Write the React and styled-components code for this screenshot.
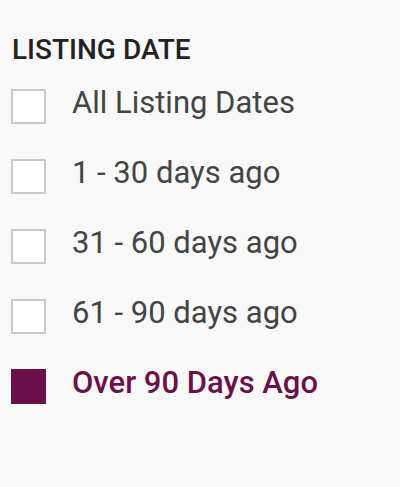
import React, { useState } from "react";
import styled, { createGlobalStyle } from "styled-components";

const Global = createGlobalStyle`
  html, body { margin: 0; padding: 0; background: #f9f9f9; }
  body { font-family: Roboto, "Noto Sans", sans-serif; }
`;

const Panel = styled.section`
  padding: 33px 11px 0 11px;
  display: flex;
  flex-direction: column;
`;

const Heading = styled.h3`
  margin: 0 0 4px 1px;
  font-size: 28px;
  line-height: 34px;
  font-weight: 500;
  color: #222;
`;

const List = styled.ul`
  list-style: none;
  margin: 0;
  padding: 0;
  display: flex;
  flex-direction: column;
`;

const Row = styled.li`
  height: 70px;
  display: flex;
  align-items: center;
  gap: 26px;
  cursor: pointer;
`;

const Box = styled.span`
  box-sizing: border-box;
  width: 35px;
  height: 35px;
  flex: none;
  background: ${(p) => (p.$checked ? "#6b1149" : "#fff")};
  border: 2px solid ${(p) => (p.$checked ? "#6b1149" : "#c9c9c9")};
`;

const Label = styled.span`
  font-size: 31px;
  line-height: 36px;
  margin-bottom: 7px;
  color: ${(p) => (p.$checked ? "#6b1149" : "#444")};
  font-weight: ${(p) => (p.$checked ? 500 : 400)};
`;

const options = [
  "All Listing Dates",
  "1 - 30 days ago",
  "31 - 60 days ago",
  "61 - 90 days ago",
  "Over 90 Days Ago",
];

export default function App() {
  const [sel, setSel] = useState(4);
  return (
    <>
      <Global />
      <Panel>
        <Heading>LISTING DATE</Heading>
        <List>
          {options.map((o, i) => (
            <Row key={o} onClick={() => setSel(i)}>
              <Box $checked={sel === i} />
              <Label $checked={sel === i}>{o}</Label>
            </Row>
          ))}
        </List>
      </Panel>
    </>
  );
}
